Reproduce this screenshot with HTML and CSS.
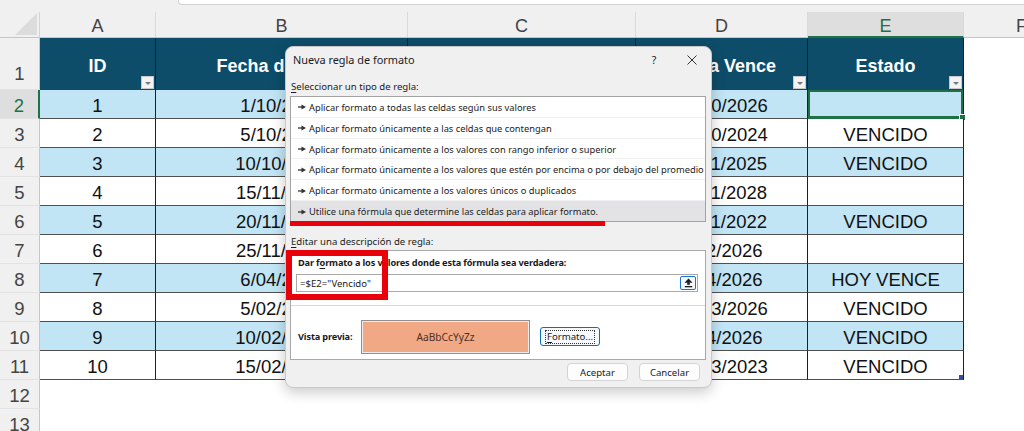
FILE: index.html
```html
<!DOCTYPE html>
<html lang="es">
<head>
<meta charset="utf-8">
<title>Nueva regla de formato</title>
<link rel="stylesheet" href="styles.css">
</head>
<body>
<div class="app">
  <div class="topbar"><div class="formula"></div></div>
  <div class="sheet">
    <div class="corner"><svg width="22" height="22" viewBox="0 0 22 22"><polygon points="22,0 22,22 0,22" fill="#dcdcdc"/></svg></div>
    <div class="ch">A</div><div class="ch">B</div><div class="ch">C</div><div class="ch">D</div><div class="ch sel">E</div><div class="ch f">F</div>

    <div class="rh first">1</div>
    <div class="hd">ID<span class="dd"></span></div>
    <div class="hd">Fecha de Inicio<span class="dd"></span></div>
    <div class="hd"><span class="dd"></span></div>
    <div class="hd">Fecha Vence<span class="dd"></span></div>
    <div class="hd">Estado<span class="dd"></span></div>
    <div class="x"></div>

    <div class="rh sel">2</div>
    <div class="c b">1</div><div class="c b">1/10/2025</div><div class="c b"></div><div class="c b">31/10/2026</div><div class="c b sel"></div><div class="x"></div>
    <div class="rh">3</div>
    <div class="c">2</div><div class="c">5/10/2023</div><div class="c"></div><div class="c">31/10/2024</div><div class="c">VENCIDO</div><div class="x"></div>
    <div class="rh">4</div>
    <div class="c b">3</div><div class="c b">10/10/2024</div><div class="c b"></div><div class="c b">10/11/2025</div><div class="c b">VENCIDO</div><div class="x"></div>
    <div class="rh">5</div>
    <div class="c">4</div><div class="c">15/11/2027</div><div class="c"></div><div class="c">15/11/2028</div><div class="c"></div><div class="x"></div>
    <div class="rh">6</div>
    <div class="c b">5</div><div class="c b">20/11/2021</div><div class="c b"></div><div class="c b">20/11/2022</div><div class="c b">VENCIDO</div><div class="x"></div>
    <div class="rh">7</div>
    <div class="c">6</div><div class="c">25/11/2025</div><div class="c"></div><div class="c">5/12/2026</div><div class="c"></div><div class="x"></div>
    <div class="rh">8</div>
    <div class="c b">7</div><div class="c b">6/04/2025</div><div class="c b"></div><div class="c b">6/04/2026</div><div class="c b">HOY VENCE</div><div class="x"></div>
    <div class="rh">9</div>
    <div class="c">8</div><div class="c">5/02/2026</div><div class="c"></div><div class="c">10/03/2026</div><div class="c">VENCIDO</div><div class="x"></div>
    <div class="rh">10</div>
    <div class="c b">9</div><div class="c b">10/02/2026</div><div class="c b"></div><div class="c b">9/04/2026</div><div class="c b">VENCIDO</div><div class="x"></div>
    <div class="rh">11</div>
    <div class="c">10</div><div class="c">15/02/2022</div><div class="c"></div><div class="c">15/03/2023</div><div class="c last">VENCIDO</div><div class="x"></div>

    <div class="rh">12</div><div class="blank"></div>
    <div class="rh">13</div><div class="blank"></div>
  </div>

  <div class="dialog">
    <div class="titlebar">
      <span class="title">Nueva regla de formato</span>
      <span class="help">?</span>
      <svg class="close" width="10" height="10" viewBox="0 0 10 10"><path d="M0.5 0.5L9.5 9.5M9.5 0.5L0.5 9.5" stroke="#333" stroke-width="1"/></svg>
    </div>
    <div class="lbl"><u>S</u>eleccionar un tipo de regla:</div>
    <div class="list">
      <div class="item"><svg class="arr" width="8" height="6" viewBox="0 0 8 6"><path d="M0 3H4.5" stroke="#333" stroke-width="1.3"/><path d="M3.5 0.6L8 3L3.5 5.4Z" fill="#333"/></svg>Aplicar formato a todas las celdas según sus valores</div>
      <div class="item"><svg class="arr" width="8" height="6" viewBox="0 0 8 6"><path d="M0 3H4.5" stroke="#333" stroke-width="1.3"/><path d="M3.5 0.6L8 3L3.5 5.4Z" fill="#333"/></svg>Aplicar formato únicamente a las celdas que contengan</div>
      <div class="item"><svg class="arr" width="8" height="6" viewBox="0 0 8 6"><path d="M0 3H4.5" stroke="#333" stroke-width="1.3"/><path d="M3.5 0.6L8 3L3.5 5.4Z" fill="#333"/></svg>Aplicar formato únicamente a los valores con rango inferior o superior</div>
      <div class="item"><svg class="arr" width="8" height="6" viewBox="0 0 8 6"><path d="M0 3H4.5" stroke="#333" stroke-width="1.3"/><path d="M3.5 0.6L8 3L3.5 5.4Z" fill="#333"/></svg>Aplicar formato únicamente a los valores que estén por encima o por debajo del promedio</div>
      <div class="item"><svg class="arr" width="8" height="6" viewBox="0 0 8 6"><path d="M0 3H4.5" stroke="#333" stroke-width="1.3"/><path d="M3.5 0.6L8 3L3.5 5.4Z" fill="#333"/></svg>Aplicar formato únicamente a los valores únicos o duplicados</div>
      <div class="item on"><svg class="arr" width="8" height="6" viewBox="0 0 8 6"><path d="M0 3H4.5" stroke="#333" stroke-width="1.3"/><path d="M3.5 0.6L8 3L3.5 5.4Z" fill="#333"/></svg>Utilice una fórmula que determine las celdas para aplicar formato.</div>
    </div>
    <div class="lbl lbl2"><u>E</u>ditar una descripción de regla:</div>
    <div class="panel">
      <div class="sec1">
        <div class="bold cond">Dar f<u>o</u>rmato a los valores donde esta fórmula sea verdadera:</div>
        <div class="input">
          <span class="val">=$E2="Vencido"</span>
          <span class="pick"><svg width="9" height="10" viewBox="0 0 9 10"><path d="M4.5 0.5L8.5 4.8H0.5Z" fill="#1a1a1a"/><rect x="3.2" y="4.5" width="2.6" height="2.3" fill="#1a1a1a"/><rect x="0.8" y="8" width="7.4" height="1.3" fill="#1a1a1a"/></svg></span>
        </div>
      </div>
      <div class="sec2">
        <span class="bold vp">Vista previa:</span>
        <div class="preview">AaBbCcYyZz</div>
        <div class="fbtn"><span class="focus"><u>F</u>ormato...</span></div>
      </div>
    </div>
    <div class="btns">
      <div class="btn">Aceptar</div>
      <div class="btn">Cancelar</div>
    </div>
  </div>

  <div class="mark mark-line"></div>
  <div class="mark mark-box"></div>
</div>
</body>
</html>
```

FILE: styles.css
```css
* { box-sizing: border-box; }

body {
  margin: 0;
  width: 1024px;
  height: 431px;
  overflow: hidden;
  background: #fff;
  font-family: "Liberation Sans", Arial, sans-serif;
}

.app {
  position: relative;
  width: 1024px;
  height: 431px;
  overflow: hidden;
}

/* ---------- top strip ---------- */
.topbar {
  height: 12px;
  background: #f0f0f0;
  padding-left: 178px;
}
.formula {
  height: 5px;
  background: #fff;
  border-left: 1px solid #d2d2d2;
  border-bottom: 1px solid #d2d2d2;
  border-bottom-left-radius: 4px;
}

/* ---------- sheet grid ---------- */
.sheet {
  display: grid;
  grid-template-columns: 40px 116px 252px 228px 172px 156px 120px;
  grid-template-rows: 26px 52px repeat(12, 29px);
  font-size: 18.5px;
}

.corner {
  background: #f0f0f0;
  border-right: 1px solid #d4d4d4;
  border-bottom: 1px solid #c6c6c6;
  display: flex;
  justify-content: flex-end;
  align-items: flex-end;
  padding: 0 2px 2px 0;
}

.ch {
  background: #f0f0f0;
  color: #444;
  font-size: 18px;
  display: flex;
  align-items: center;
  justify-content: center;
  padding-top: 4px;
  border-right: 1px solid #d9d9d9;
  border-bottom: 1px solid #c6c6c6;
}
.ch.sel {
  background: #dedede;
  color: #1e7145;
  border-bottom: 2px solid #1e7145;
}
.ch.f {
  justify-content: flex-start;
  padding-left: 52px;
}

.rh {
  background: #f0f0f0;
  color: #444;
  font-size: 18.5px;
  display: flex;
  align-items: center;
  justify-content: center;
  padding-top: 3px;
  border-right: 1px solid #c6c6c6;
  border-bottom: 1px solid #e2e2e2;
}
.rh.first {
  align-items: flex-end;
  padding-bottom: 4px;
}
.rh.sel {
  background: #dedede;
  color: #1e7145;
  border-right: 2px solid #1e7145;
}

.hd {
  position: relative;
  background: #0e4d69;
  color: #fff;
  font-weight: bold;
  font-size: 18px;
  display: flex;
  align-items: center;
  justify-content: center;
  padding-top: 4px;
  white-space: nowrap;
  border-right: 1px solid #0a2633;
}
.dd {
  position: absolute;
  right: 1px;
  bottom: 1px;
  width: 13px;
  height: 13px;
  background: #f3f3f3;
  border: 1px solid #c8c8c8;
}
.dd::after {
  content: "";
  position: absolute;
  left: 3px;
  top: 5px;
  border-left: 3px solid transparent;
  border-right: 3px solid transparent;
  border-top: 3px solid #777;
}

.c {
  position: relative;
  background: #fff;
  color: #111;
  display: flex;
  align-items: center;
  justify-content: center;
  padding-top: 3px;
  white-space: nowrap;
  border-right: 1px solid #1f1f1f;
  border-bottom: 1px solid #4f4f4f;
}
.c.b { background: #c1e5f5; }
.c.sel {
  box-shadow: inset 0 0 0 2px #1e7145;
  border-bottom-color: #1e7145;
}
.c.sel::after {
  content: "";
  position: absolute;
  right: -3px;
  bottom: -3px;
  width: 5px;
  height: 5px;
  background: #1e7145;
  border: 1px solid #fff;
}
.c.last::after {
  content: "";
  position: absolute;
  right: 0;
  bottom: 0;
  width: 4px;
  height: 4px;
  background: #3b4ba0;
}

.x { background: #fff; }
.blank { grid-column: span 6; background: #fff; }

/* ---------- dialog ---------- */
.dialog {
  position: absolute;
  left: 285px;
  top: 46px;
  width: 427px;
  height: 342px;
  background: #f0f0f0;
  border: 1px solid #c9c9c9;
  border-radius: 8px;
  box-shadow: 0 4px 14px rgba(0, 0, 0, 0.22);
  padding: 0 5px 0 4px;
  display: flex;
  flex-direction: column;
  font-family: "Noto Sans", "Open Sans", sans-serif;
  font-size: 9.3px;
  color: #1b1b1b;
}

.titlebar {
  height: 25px;
  display: flex;
  align-items: center;
  padding-left: 3px;
}
.title { flex: 1; font-size: 10.9px; }
.help { width: 8px; text-align: center; font-size: 10.5px; margin-right: 29px; }
.close { margin-right: 9px; }

.lbl {
  height: 14px;
  line-height: 14px;
  margin-top: 8px;
  padding-left: 1px;
  font-size: 9.6px;
}
.lbl2 { margin-top: 13px; }
u { text-decoration-thickness: 1px; text-underline-offset: 1.5px; }

.list {
  margin-top: 2px;
  height: 126px;
  background: #fff;
  border: 1px solid #a3a3a3;
  display: flex;
  flex-direction: column;
}
.item {
  flex: 1;
  display: flex;
  align-items: center;
  padding-left: 7px;
  padding-top: 1px;
  white-space: nowrap;
  border-bottom: 1px solid #efefef;
}
.item:last-child { border-bottom: none; }
.item.on { background: #e3e3e6; }
.arr { margin-right: 3px; flex: none; }

.panel {
  margin-top: 1px;
  height: 110px;
  background: #fff;
  border: 1px solid #a8a8a8;
  display: flex;
  flex-direction: column;
}
.bold { font-weight: bold; font-size: 9.2px; letter-spacing: -0.15px; }
.sec1 {
  height: 55px;
  padding: 5px 7px 0 5px;
  border-bottom: 1px solid #d9d9d9;
}
.cond { padding-left: 2px; height: 14px; line-height: 14px; }
.input {
  margin-top: 4px;
  height: 18px;
  border: 1px solid #a9a9a9;
  display: flex;
  align-items: center;
  justify-content: space-between;
  padding: 0 1px 0 3px;
  font-size: 9.6px;
}
.pick {
  width: 16px;
  height: 14px;
  border: 1px solid #1a73d0;
  border-radius: 2px;
  background: #f4f8fc;
  display: flex;
  align-items: center;
  justify-content: center;
}

.sec2 {
  flex: 1;
  display: flex;
  align-items: center;
  padding: 8px 0 0 7px;
}
.vp { width: 63px; flex: none; }
.preview {
  width: 169px;
  height: 34px;
  background: #f1a884;
  border: 1px solid #8f8f8f;
  box-shadow: inset 0 0 0 1px #ececec;
  display: flex;
  align-items: center;
  justify-content: center;
  color: #4e3024;
  font-size: 10.2px;
}
.fbtn {
  margin-left: 10px;
  width: 60px;
  height: 19px;
  border: 1px solid #0f6cc4;
  border-radius: 3px;
  background: #f6f9fc;
  display: flex;
  align-items: center;
  justify-content: center;
  font-size: 9.6px;
}
.focus {
  outline: 1px dotted #333;
  outline-offset: 0;
  padding: 0 1px;
  line-height: 12px;
}

.btns {
  margin-top: 3px;
  display: flex;
  justify-content: flex-end;
  gap: 11px;
  padding-right: 6px;
  font-size: 9.6px;
}
.btn {
  width: 61px;
  height: 18px;
  background: #fdfdfd;
  border: 1px solid #d3d3d3;
  border-radius: 4px;
  display: flex;
  align-items: center;
  justify-content: center;
}

/* ---------- red annotations ---------- */
.mark {
  position: absolute;
  border-color: #e8000a;
}
.mark-line {
  left: 290px;
  top: 221px;
  width: 315px;
  height: 5px;
  background: #e8000a;
}
.mark-box {
  left: 286px;
  top: 250px;
  width: 102px;
  height: 50px;
  border: 6px solid #e8000a;
}
```
